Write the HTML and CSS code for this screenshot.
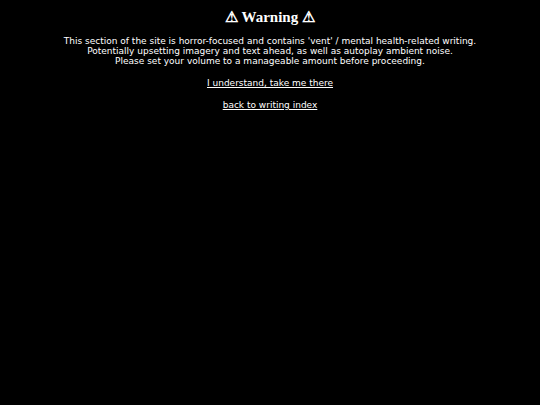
FILE: index.html
```html
<!DOCTYPE html>
<html lang="en">
  <head>
    <meta charset="UTF-8" />
    <meta name="viewport" content="width=device-width, initial-scale=1.0" />
    <title>Warning</title>
    <link rel="stylesheet" href="styles.css">
  </head>
  <body>
    <div class="warning">
      <h1>&#9888; Warning &#9888;</h1>
      <p class="notice">
        This section of the site is horror-focused and contains 'vent' / mental health-related writing.<br />
        Potentially upsetting imagery and text ahead, as well as autoplay ambient noise.<br />
        Please set your volume to a manageable amount before proceeding.
      </p>
      <p><a href="#">I understand, take me there</a></p>
      <p><a href="#">back to writing index</a></p>
    </div>
  </body>
</html>
```

FILE: styles.css
```css
body {
  background-color: #000;
  color: #fff;
  margin: 8px;
  font-family: "DejaVu Sans", Verdana, sans-serif;
  font-size: 9px;
}

.warning {
  text-align: center;
}

h1 {
  font-family: "Liberation Serif", "Times New Roman", serif;
  font-size: 15px;
  font-weight: bold;
  margin: 0 0 10px 0;
}

p {
  margin: 12px 0;
  line-height: 10px;
}

.notice {
  margin-top: 0;
  margin-bottom: 11px;
}

a {
  color: #fff;
}
```
